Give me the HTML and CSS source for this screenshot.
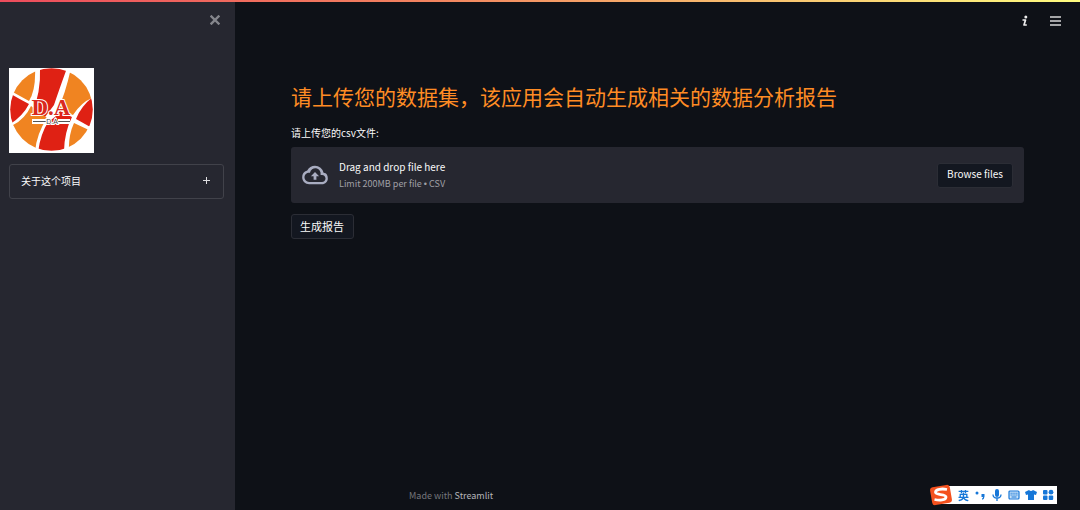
FILE: index.html
```html
<!DOCTYPE html>
<html lang="zh-CN">
<head>
<meta charset="utf-8">
<meta name="viewport" content="width=device-width, initial-scale=1">
<title>数据分析报告</title>
<link rel="stylesheet" href="styles.css">
</head>
<body>
<div class="decoration"></div>
<div class="app">
  <aside class="sidebar">
    <div class="sidebar-top">
      <button class="icon-button close" type="button" aria-label="Close sidebar">
        <svg width="10" height="10" viewBox="0 0 10 10"><path d="M1.500 1.500l7 7M8.500 1.500l-7 7" stroke="#85868c" stroke-width="2.400" stroke-linecap="square"/></svg>
      </button>
    </div>
    <svg class="logo" viewBox="0 0 85 85" role="img" aria-label="D.A">
      <defs><clipPath id="ball"><circle cx="42.500" cy="41.500" r="41.300"/></clipPath></defs>
      <rect width="85" height="85" fill="#fff"/>
      <g clip-path="url(#ball)">
        <path d="M31 0H58Q50 22 45 37L36 49L23 45Q32 25 31 0z" fill="#df2114"/>
        <path d="M0 0H26Q27 22 20 33L0 22z" fill="#f08421"/>
        <path d="M0 25Q10 31 20 36Q14 48 0 57z" fill="#df2114"/>
        <path d="M62 0L85 0V29Q72 34 64 47L49 41Q56 27 62 0z" fill="#f08421"/>
        <path d="M85 28V61L67 51Q72 38 85 28z" fill="#df2114"/>
        <path d="M4 57Q16 51 22 38L38 50Q27 67 26 85H0z" fill="#f08421"/>
        <path d="M39 54Q47 49 51 43L63 49Q55 65 55 85H29Q31 67 39 54z" fill="#df2114"/>
        <path d="M65 55L82 63L66 85H60Q59 68 65 55z" fill="#f08421"/>
      </g>
      <text x="42" y="47" class="logo-main">D.A</text>
      <path d="M23 53.500H37M49 53.500H61" stroke="#fff" stroke-width="5"/>
      <path d="M24 53.500H37M49 53.500H61" stroke="#555" stroke-width="1"/>
      <text x="43" y="56" class="logo-sub">D.A</text>
    </svg>
    <button class="expander" type="button" aria-expanded="false">
      <span>关于这个项目</span>
      <svg width="7" height="7" viewBox="0 0 7 7"><path d="M3.500 0v7M0 3.500h7" stroke="#dedee0" stroke-width="1"/></svg>
    </button>
  </aside>
  <div class="view">
    <header class="toolbar">
      <button class="icon-button" type="button" aria-label="Info">
        <svg width="8" height="12" viewBox="0 0 8 12"><circle cx="4.800" cy="2" r="1.500" fill="#eee"/><path d="M1.500 5H4.500L3 10H5.800" fill="none" stroke="#eee" stroke-width="1.700" stroke-linejoin="round"/></svg>
      </button>
      <button class="icon-button" type="button" aria-label="Menu">
        <svg width="12" height="10" viewBox="0 0 12 10"><path d="M1 1h11M1 5h11M1 9h11" stroke="#d6d6d8" stroke-width="1.700"/></svg>
      </button>
    </header>
    <main class="content">
      <h1 class="title">请上传您的数据集，该应用会自动生成相关的数据分析报告</h1>
      <p class="label" id="upload-label">请上传您的csv文件:</p>
      <section class="dropzone" aria-labelledby="upload-label">
        <svg width="28" height="28" viewBox="0 0 24 24" fill="#a9adc1"><path d="M19.350 10.040A7.490 7.490 0 0 0 12 4C9.110 4 6.600 5.640 5.350 8.040A5.994 5.994 0 0 0 1 14c0 3.310 2.690 6 6 6h11c2.760 0 5-2.240 5-5 0-2.640-1.050-4.780-3.650-4.960zM18 18H7c-2.210 0-4-1.790-4-4s1.790-4 4-4h.71A4.600 4.600 0 0 1 16.800 11.500v.5H18c1.660 0 3 1.340 3 3s-1.340 3-3 3zM8.500 13h2.300v3h2.400v-3h2.300L12 9.500z"/></svg>
        <div class="drop-text">
          <span>Drag and drop file here</span>
          <small>Limit 200MB per file <span class="bullet">•</span> CSV</small>
        </div>
        <button class="button" type="button">Browse files</button>
      </section>
      <button class="button generate" type="button">生成报告</button>
    </main>
    <footer class="footer">Made with <a href="#">Streamlit</a></footer>
  </div>
</div>
<div class="ime">
  <svg class="ime-logo" width="24" height="22" viewBox="0 0 24 22"><rect x="2" y="2" width="20" height="18" rx="3" fill="#f4511e" transform="rotate(-10 12 11)"/><path d="M18 5.500C13 4.500 6.500 5 6.500 8.300C6.500 11.500 17 9.500 17 13C17 16.500 10 16.500 5.500 15.500" fill="none" stroke="#fff" stroke-width="2.800"/></svg>
  <span class="ime-mode">英</span>
  <svg width="12" height="12" viewBox="0 0 12 12" fill="#1677d8"><circle cx="3" cy="4" r="1.500"/><path d="M7.500 5h3v2.500Q10.500 10 8 10.800V9.500Q9 9 9 8H7.500z"/></svg>
  <svg width="12" height="12" viewBox="0 0 12 12" fill="#1677d8"><rect x="4" y="0" width="4" height="8" rx="2"/><path d="M2 5.500Q2 9 6 9T10 5.500M6 9v3" fill="none" stroke="#1677d8" stroke-width="1.300"/></svg>
  <svg width="12" height="12" viewBox="0 0 12 12"><rect x="1" y="2" width="10" height="8" rx="1" fill="#c8e1f8" stroke="#1677d8" stroke-width="1.200"/><path d="M2.500 4.200h7M2.500 6h7" stroke="#1677d8" stroke-width="1" stroke-dasharray="1.300 .6"/><path d="M3.500 8h5" stroke="#1677d8"/></svg>
  <svg width="12" height="12" viewBox="0 0 12 12" fill="#1677d8"><path d="M4 1Q6 3 8 1L12 3L11 6L9 5.500V11H3V5.500L1 6L0 3z"/></svg>
  <svg width="12" height="12" viewBox="0 0 12 12" fill="#1677d8"><rect x="1" y="1" width="4.500" height="4.500" rx="1"/><circle cx="9" cy="3.200" r="2.400"/><rect x="1" y="6.500" width="4.500" height="4.500" rx="1"/><rect x="6.700" y="6.500" width="4.500" height="4.500" rx="1"/></svg>
</div>
</body>
</html>
```
FILE: styles.css
```css
* { box-sizing: border-box; }
body {
  margin: 0;
  background: #0e1117;
  color: #fafafa;
  font-family: "Noto Sans CJK SC", sans-serif;
  font-size: 11px;
  line-height: 16px;
}
button {
  font: inherit;
  color: inherit;
  cursor: pointer;
}
svg { display: block; flex: none; }
.decoration {
  position: fixed;
  inset: 0 0 auto;
  height: 2px;
  background: linear-gradient(90deg, #ed4c5c, #f2845f 40%, #fffd80);
}
.app { display: flex; min-height: 100vh; }
.sidebar {
  flex: 0 0 235px;
  padding: 11px 11px 12px 9px;
  background: #262730;
}
.sidebar-top {
  display: flex;
  justify-content: flex-end;
  height: 57px;
}
.icon-button {
  display: flex;
  align-items: center;
  justify-content: center;
  width: 18px;
  height: 18px;
  padding: 0;
  border: 0;
  background: none;
}
.logo { width: 85px; height: 85px; margin-bottom: 11px; }
.logo-main {
  font: bold 23px "Liberation Serif", serif;
  fill: #d92a20;
  stroke: #fff;
  stroke-width: 2px;
  paint-order: stroke;
  text-anchor: middle;
}
.logo-sub {
  font: 7px "Liberation Sans", sans-serif;
  fill: #444;
  stroke: #fff;
  stroke-width: 2px;
  paint-order: stroke;
  text-anchor: middle;
}
.expander {
  display: flex;
  align-items: center;
  justify-content: space-between;
  width: 100%;
  height: 35px;
  padding: 0 13px 2px 11px;
  border: 1px solid #41424a;
  border-radius: 3px;
  background: none;
  font-size: 10px;
}
.view {
  flex: 1;
  display: flex;
  flex-direction: column;
  min-width: 0;
}
.toolbar {
  display: flex;
  justify-content: flex-end;
  gap: 12px;
  padding: 12px 16px 0;
}
.content {
  flex: 1;
  padding: 50px 56px 0;
}
.title {
  margin: 0 0 13px;
  color: #ff8c24;
  font-size: 21px;
  font-weight: 400;
  line-height: 32px;
}
.label { margin: 0 0 6px; font-size: 10px; }
.dropzone {
  display: flex;
  align-items: center;
  gap: 10px;
  min-height: 56px;
  margin-bottom: 11px;
  padding: 8px 11px 8px 10px;
  border-radius: 3px;
  background: #262730;
}
.drop-text {
  flex: 1;
  display: flex;
  flex-direction: column;
  gap: 1px;
  font-size: 10px;
}
.drop-text small { color: #a0a0a6; font-size: 9px; }
.bullet { font-family: "Liberation Sans", sans-serif; }
.button {
  height: 25px;
  padding: 0 9px 2px;
  border: 1px solid #2b2d35;
  border-radius: 3px;
  background: #131720;
  font-size: 10px;
}
.generate { padding: 0 9px 2px 8px; font-size: 11px; }
.footer {
  padding: 0 174px 6px;
  color: #75777c;
  font-size: 9px;
}
.footer a { color: #b6b7ba; text-decoration: none; }
.ime {
  position: fixed;
  right: 23px;
  bottom: 6px;
  display: flex;
  align-items: center;
  gap: 5px;
  height: 18px;
  padding-right: 3px;
  background: linear-gradient(90deg, transparent 12px, #fff 12px);
}
.ime-mode {
  color: #1677d8;
  font-size: 11px;
  font-weight: 700;
}
```
